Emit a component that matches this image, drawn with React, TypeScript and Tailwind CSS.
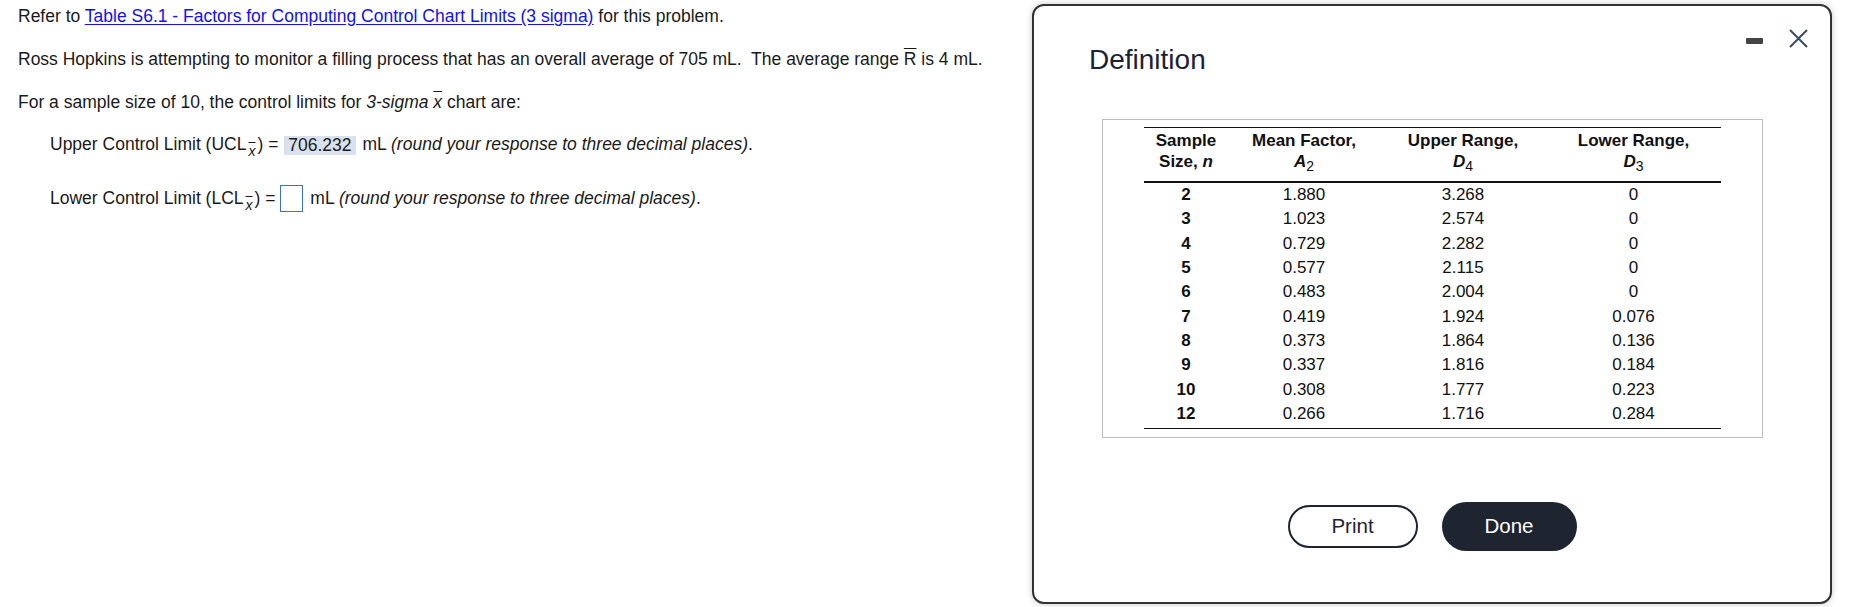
import React from "react";

const rows: [string, string, string, string][] = [
  ["2", "1.880", "3.268", "0"],
  ["3", "1.023", "2.574", "0"],
  ["4", "0.729", "2.282", "0"],
  ["5", "0.577", "2.115", "0"],
  ["6", "0.483", "2.004", "0"],
  ["7", "0.419", "1.924", "0.076"],
  ["8", "0.373", "1.864", "0.136"],
  ["9", "0.337", "1.816", "0.184"],
  ["10", "0.308", "1.777", "0.223"],
  ["12", "0.266", "1.716", "0.284"],
];

const XBarSub = () => (
  <span className="relative top-[6px] px-[2px] text-[14px] italic overline leading-none">x</span>
);

const Sym = ({ letter, sub }: { letter: string; sub: string }) => (
  <span>
    <span className="italic">{letter}</span>
    <span className="relative top-[4px] text-[14px] font-normal">{sub}</span>
  </span>
);

const Question: React.FC = () => (
  <div className="flex-1 pl-[18px] pt-[6px] text-[17.5px] leading-[20px] text-[#1a1a1a]">
    <p>
      Refer to{" "}
      <a className="text-[#1212e6] underline underline-offset-2">
        Table S6.1 - Factors for Computing Control Chart Limits (3 sigma)
      </a>{" "}
      for this problem.
    </p>
    <p className="mt-[23px]">
      Ross Hopkins is attempting to monitor a filling process that has an overall average of 705 mL.&nbsp; The
      average range <span className="overline">R</span> is 4 mL.
    </p>
    <p className="mt-[23px]">
      For a sample size of 10, the control limits for <span className="italic">3-sigma</span>{" "}
      <span className="italic overline">x</span> chart are:
    </p>
    <div className="mt-[22px] flex h-[20px] items-center pl-[32px] whitespace-pre">
      <span>
        Upper Control Limit (UCL<XBarSub />) ={" "}
      </span>
      <span className="ml-[1px] inline-block h-[19px] translate-y-[1px] bg-[#d9e1ee] px-[4px] leading-[19px]">
        706.232
      </span>
      <span className="ml-[7px]">
        mL <span className="italic">(round your response to three decimal places)</span>.
      </span>
    </div>
    <div className="mt-[34px] flex h-[20px] items-center pl-[32px] whitespace-pre">
      <span>
        Lower Control Limit (LCL<XBarSub />) ={" "}
      </span>
      <span className="inline-block h-[27px] w-[23px] border border-[#3a6fd8] bg-white" />
      <span className="ml-[7px]">
        mL <span className="italic">(round your response to three decimal places)</span>.
      </span>
    </div>
  </div>
);

const FactorTable: React.FC = () => (
  <div className="ml-[68px] w-[661px] border border-[#bdbdbd] pt-[7px] pb-[8px]">
    <div className="mx-auto w-[577px] text-[17px] text-[#111]">
      <div className="border-t border-[#111]" />
      <div className="grid grid-cols-[84px_152px_166px_175px] border-b-2 border-[#111] pt-[2px] pb-[8px] text-center font-bold leading-[21px]">
        <div>
          Sample
          <br />
          Size, <span className="italic">n</span>
        </div>
        <div>
          Mean Factor,
          <br />
          <Sym letter="A" sub="2" />
        </div>
        <div>
          Upper Range,
          <br />
          <Sym letter="D" sub="4" />
        </div>
        <div>
          Lower Range,
          <br />
          <Sym letter="D" sub="3" />
        </div>
      </div>
      <div className="pb-[2px]">
        {rows.map((r) => (
          <div
            key={r[0]}
            className="grid h-[24.3px] grid-cols-[84px_152px_166px_175px] items-center text-center leading-[24px]"
          >
            <div className="font-bold">{r[0]}</div>
            <div>{r[1]}</div>
            <div>{r[2]}</div>
            <div>{r[3]}</div>
          </div>
        ))}
      </div>
      <div className="border-t border-[#111]" />
    </div>
  </div>
);

const DefinitionDialog: React.FC = () => (
  <div className="mt-[4px] mr-[17px] h-[600px] w-[800px] shrink-0 rounded-[12px] border-2 border-[#333] bg-white shadow-[0_0_6px_rgba(0,0,0,0.22)]">
    <div className="flex items-start justify-between">
      <h2 className="mt-[38px] ml-[55px] text-[28px] leading-[32px] text-[#1b2235]">Definition</h2>
      <div className="mt-[23px] mr-[22px] flex items-start gap-[26px]">
        <span className="mt-[9px] block h-[6px] w-[17px] rounded-[1px] bg-[#444]" />
        <svg width="19" height="19" viewBox="0 0 19 19" className="block">
          <path d="M1 1 L18 18 M18 1 L1 18" stroke="#3d4b5c" strokeWidth="2" fill="none" />
        </svg>
      </div>
    </div>
    <div className="mt-[43px]">
      <FactorTable />
    </div>
    <div className="mt-[64px] flex items-center justify-center gap-[24px] text-[20.5px]">
      <button className="h-[43px] w-[130px] rounded-full border-2 border-[#1e2430] bg-white text-[#1e2430]">
        Print
      </button>
      <button className="h-[49px] w-[135px] rounded-full bg-[#1e2430] text-white">Done</button>
    </div>
  </div>
);

export default function App() {
  return (
    <div className="flex h-[607px] w-[1849px] overflow-hidden bg-white font-['Liberation_Sans',Arial,sans-serif]">
      <Question />
      <DefinitionDialog />
    </div>
  );
}
